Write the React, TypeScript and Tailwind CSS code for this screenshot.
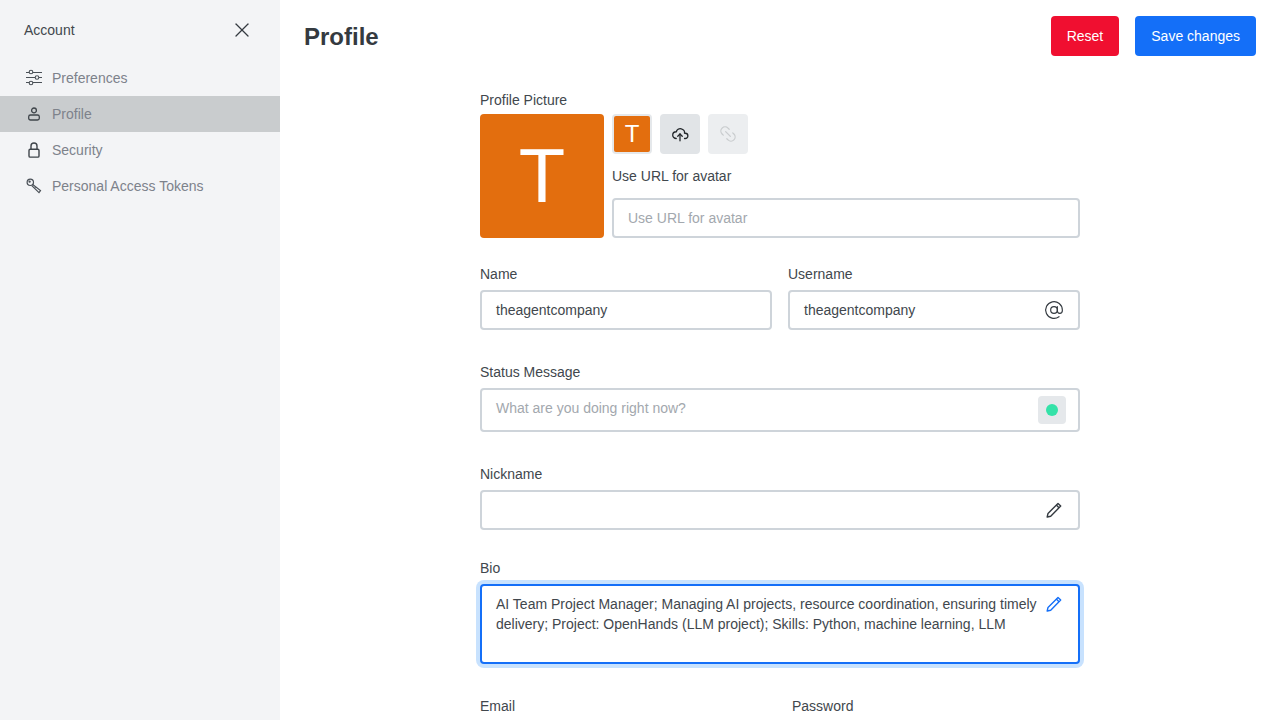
import React from "react";
import { X, Link2, AtSign } from "lucide-react";

const font = "font-['Liberation_Sans',Arial,sans-serif]";

const Label = ({ children }: { children: React.ReactNode }) => (
  <div className="text-sm leading-4 text-[#41474d]">{children}</div>
);

const Sliders = () => (
  <svg width="18" height="18" viewBox="0 0 18 18" fill="none" stroke="#4a5057" strokeWidth="1.1">
    <path d="M1 3.5h3M8 3.5h9M1 8.5h9M14 8.5h3M1 13.5h3M8 13.5h9" />
    <circle cx="6" cy="3" r="1.8" />
    <circle cx="12" cy="8.5" r="1.8" />
    <circle cx="6" cy="14" r="1.8" />
  </svg>
);

const User = () => (
  <svg width="14" height="14" viewBox="0 0 14 14" fill="none" stroke="#3f454b" strokeWidth="1.3">
    <circle cx="7" cy="3.4" r="2.4" />
    <rect x="1.7" y="8" width="10.6" height="5" rx="1.8" />
  </svg>
);

const LockIcon = () => (
  <svg width="14" height="16" viewBox="0 0 14 16" fill="none" stroke="#3f454b" strokeWidth="1.4">
    <rect x="2" y="7.3" width="10" height="7.8" rx="1.2" />
    <path d="M4 7.3V4a3 3 0 0 1 6 0v3.3" />
  </svg>
);

const Key = () => (
  <svg width="16" height="16" viewBox="0 0 16 16" fill="none" stroke="#4a5057" strokeWidth="1.2">
    <circle cx="4.3" cy="4.3" r="3.2" />
    <circle cx="3.6" cy="3.6" r="0.6" />
    <path d="M6.7 6.5 14.5 12.6 13 14.6 5.8 7.6M9 9.5l1-1" />
  </svg>
);

const PencilIcon = ({ color }: { color: string }) => (
  <svg width="18" height="18" viewBox="0 0 18 18" fill="none" stroke={color} strokeWidth="1.4" strokeLinejoin="round">
    <path d="M2.2 16 3 12.4 13 2.4l2.7 2.7L5.7 15.2 2.2 16Z" />
    <path d="M11.3 4.1l2.7 2.7" />
  </svg>
);

const CloudUp = () => (
  <svg width="18" height="18" viewBox="0 0 24 24" fill="none" stroke="#212529" strokeWidth="1.7" strokeLinecap="round" strokeLinejoin="round">
    <path d="M7 18a4.6 4.4 0 0 1 0-9a5 4.5 0 0 1 11 2h1a3.5 3.5 0 0 1 0 7h-1" />
    <path d="M9 15l3-3l3 3" />
    <path d="M12 12v9" />
  </svg>
);

const NavItem = ({ icon, label, active }: { icon: React.ReactNode; label: string; active?: boolean }) => (
  <div className={`flex h-9 items-center pl-[25px] ${active ? "bg-[#c9ccce]" : ""}`}>
    <span className="flex w-[18px] items-center justify-center">{icon}</span>
    <span className="ml-[9px] text-sm text-[#7d828b]">{label}</span>
  </div>
);

const boxed = "rounded border-2 border-[#ced4da] bg-white";

export default function App() {
  return (
    <div className={`flex h-screen w-full overflow-hidden bg-white ${font}`}>
      <aside className="w-[280px] shrink-0 bg-[#f3f4f6]">
        <div className="flex h-[60px] items-center justify-between pl-6 pr-[26px]">
          <span className="text-sm text-[#41474d]">Account</span>
          <X size={24} strokeWidth={1.3} color="#343a40" />
        </div>
        <nav>
          <NavItem icon={<Sliders />} label="Preferences" />
          <NavItem icon={<User />} label="Profile" active />
          <NavItem icon={<LockIcon />} label="Security" />
          <NavItem icon={<Key />} label="Personal Access Tokens" />
        </nav>
      </aside>
      <main className="min-w-0 flex-1">
        <header className="flex items-center justify-between px-6 pt-4">
          <h1 className="pt-[1px] text-2xl font-bold text-[#343a40]">Profile</h1>
          <div className="flex gap-4">
            <button className="h-10 rounded bg-[#f00f30] px-4 text-sm text-white">Reset</button>
            <button className="h-10 rounded bg-[#146ff8] px-4 text-sm text-white">Save changes</button>
          </div>
        </header>
        <div className="mx-auto mt-9 w-[600px]">
          <Label>Profile Picture</Label>
          <div className="mt-[6px] flex gap-2">
            <div className="flex h-[124px] w-[124px] items-center justify-center rounded bg-[#e36e0e] text-[76px] leading-none text-white">T</div>
            <div className="flex-1">
              <div className="flex gap-2">
                <div className="flex h-10 w-10 items-center justify-center rounded border-2 border-[#e5e8eb] bg-[#e36e0e] text-2xl text-white">T</div>
                <div className="flex h-10 w-10 items-center justify-center rounded bg-[#e1e4e7]">
                  <CloudUp />
                </div>
                <div className="flex h-10 w-10 items-center justify-center rounded bg-[#eceef0]">
                  <Link2 size={20} strokeWidth={1.5} color="#c9ccce" className="rotate-45" />
                </div>
              </div>
              <div className="mt-[14px] text-sm leading-4 text-[#41474d]">Use URL for avatar</div>
              <div className={`mt-[14px] flex h-10 items-center px-[14px] text-sm text-[#a3a8ae] ${boxed}`}>Use URL for avatar</div>
            </div>
          </div>

          <div className="mt-7 flex gap-4">
            <div className="flex-1">
              <Label>Name</Label>
              <div className={`mt-2 flex h-10 items-center px-[14px] text-sm text-[#41474d] ${boxed}`}>theagentcompany</div>
            </div>
            <div className="flex-1">
              <Label>Username</Label>
              <div className={`mt-2 flex h-10 items-center justify-between pl-[14px] pr-[14px] text-sm text-[#41474d] ${boxed}`}>
                <span>theagentcompany</span>
                <AtSign size={20} strokeWidth={1.4} color="#343a40" />
              </div>
            </div>
          </div>

          <div className="mt-[34px]">
            <Label>Status Message</Label>
            <div className={`mt-2 flex h-11 items-start justify-between pl-[14px] pr-[12px] text-sm text-[#a3a8ae] ${boxed}`}>
              <span className="mt-[8px] leading-[20px]">What are you doing right now?</span>
              <span className="mt-[6px] flex h-7 w-7 items-center justify-center rounded bg-[#e5e8eb]">
                <span className="h-3 w-3 rounded-full bg-[#34e2a8]" />
              </span>
            </div>
          </div>

          <div className="mt-[34px]">
            <Label>Nickname</Label>
            <div className={`mt-2 flex h-10 items-center justify-end pr-[15px] ${boxed}`}>
              <PencilIcon color="#343a40" />
            </div>
          </div>

          <div className="mt-[30px]">
            <Label>Bio</Label>
            <div className="mt-2 flex h-20 items-start justify-between rounded border-2 border-[#146ff8] bg-white pl-[14px] pr-[15px] pt-2 text-sm leading-5 text-[#41474d] shadow-[0_0_0_4px_#c8e2fe]">
              <span className="w-[548px]">AI Team Project Manager; Managing AI projects, resource coordination, ensuring timely delivery; Project: OpenHands (LLM project); Skills: Python, machine learning, LLM</span>
              <span className="mt-[1px] shrink-0"><PencilIcon color="#146ff8" /></span>
            </div>
          </div>

          <div className="mt-[34px] flex gap-6">
            <div className="flex-1"><Label>Email</Label></div>
            <div className="flex-1"><Label>Password</Label></div>
          </div>
        </div>
      </main>
    </div>
  );
}
